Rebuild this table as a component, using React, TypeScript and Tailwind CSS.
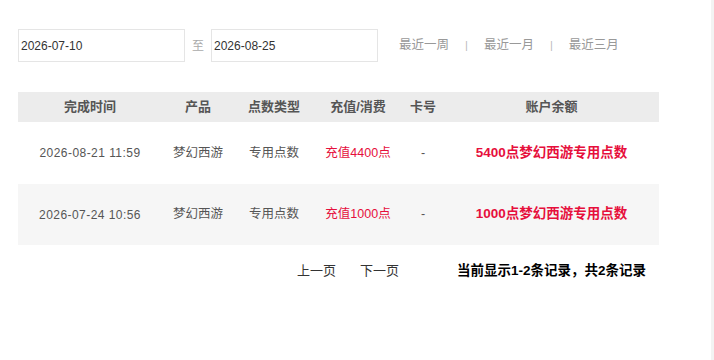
import React from 'react';

type Rec = {
  time: string;
  product: string;
  kind: string;
  amount: string;
  card: string;
  balance: string;
  striped: boolean;
};

const records: Rec[] = [
  { time: '2026-08-21 11:59', product: '梦幻西游', kind: '专用点数', amount: '充值4400点', card: '-', balance: '5400点梦幻西游专用点数', striped: false },
  { time: '2026-07-24 10:56', product: '梦幻西游', kind: '专用点数', amount: '充值1000点', card: '-', balance: '1000点梦幻西游专用点数', striped: true },
];

const cols = 'grid grid-cols-[144px_72px_80px_88px_42px_1fr]';

export default function App() {
  return (
    <div
      className="flex h-[360px] w-[714px] bg-white text-[13px] text-[#555]"
      style={{ fontFamily: '"Liberation Sans", "Noto Sans CJK SC", sans-serif' }}
    >
      <div className="flex-1 pl-[18px] pt-[29px]">
        {/* Date filter */}
        <div className="flex items-center">
          <div className="flex h-[33px] w-[167px] items-center border border-[#e5e5e5] pl-[2px] text-[12px] text-[#333]">
            2026-07-10
          </div>
          <span className="mx-[7px] text-[12px] text-[#aaa]">至</span>
          <div className="flex h-[33px] w-[167px] items-center border border-[#e5e5e5] pl-[2px] text-[12px] text-[#333]">
            2026-08-25
          </div>
          <div className="ml-[21px] flex items-center text-[12.5px] text-[#999]">
            <span>最近一周</span>
            <span className="mx-[16px] text-[11px] text-[#bbb]">|</span>
            <span>最近一月</span>
            <span className="mx-[16px] text-[11px] text-[#bbb]">|</span>
            <span>最近三月</span>
          </div>
        </div>

        {/* Table */}
        <div className="mt-[30px] w-[641px]">
          <div className={`${cols} h-[30px] items-center bg-[#ececec] text-center font-bold text-[#555]`}>
            <div>完成时间</div>
            <div>产品</div>
            <div>点数类型</div>
            <div>充值/消费</div>
            <div>卡号</div>
            <div>账户余额</div>
          </div>
          {records.map((r) => (
            <div
              key={r.time}
              className={`${cols} items-center text-center text-[12.5px] ${r.striped ? 'h-[61px] bg-[#f6f6f6]' : 'h-[62px] bg-white'}`}
            >
              <div className="text-[12px] tracking-[0.45px] text-[#555]">{r.time}</div>
              <div>{r.product}</div>
              <div>{r.kind}</div>
              <div className="text-[#e60f3c]">{r.amount}</div>
              <div>{r.card}</div>
              <div className="text-[13.5px] font-bold text-[#e60f3c]">{r.balance}</div>
            </div>
          ))}
        </div>

        {/* Pager */}
        <div className="mt-[16px] flex items-center text-[13px] text-[#333]">
          <span className="ml-[279px]">上一页</span>
          <span className="ml-[24px]">下一页</span>
          <span className="ml-[58px] text-[13.5px] font-bold text-black">当前显示1-2条记录，共2条记录</span>
        </div>
      </div>
      <div className="w-[3px] bg-[#f3f3f3]" />
    </div>
  );
}
